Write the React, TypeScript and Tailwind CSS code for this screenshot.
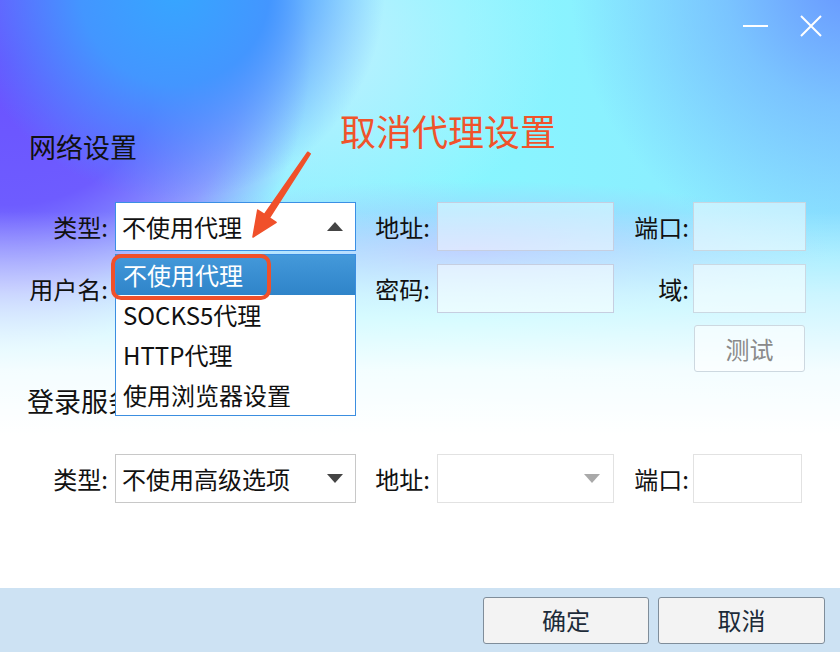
import React from "react";

const font = "font-['Noto_Sans_CJK_SC','Noto_Sans',sans-serif]";

function TriUp({ color = "#444" }: { color?: string }) {
  return (
    <svg width="16" height="9" viewBox="0 0 16 9">
      <polygon points="8,0 16,9 0,9" fill={color} />
    </svg>
  );
}

function TriDown({ color = "#444" }: { color?: string }) {
  return (
    <svg width="16" height="9" viewBox="0 0 16 9">
      <polygon points="0,0 16,0 8,9" fill={color} />
    </svg>
  );
}

function Label({ text, w }: { text: string; w: string }) {
  return <div className={`${w} shrink-0 text-right text-[24px] leading-none text-[#111]`}>{text}</div>;
}

export default function App() {
  const options = ["不使用代理", "SOCKS5代理", "HTTP代理", "使用浏览器设置"];

  return (
    <div className={`w-[840px] h-[652px] flex flex-col overflow-hidden bg-white ${font}`}>
      {/* main area with the gradient backdrop */}
      <div className="relative h-[588px] bg-[linear-gradient(180deg,rgba(255,255,255,0)_0%,rgba(255,255,255,0)_36%,rgba(255,255,255,0.55)_50%,rgba(255,255,255,0.9)_63%,#fff_74%),radial-gradient(ellipse_360px_70px_at_470px_250px,rgba(175,185,255,0.85),rgba(175,185,255,0)),radial-gradient(circle_210px_at_175px_-10px,#36a6ff_0%,#4396ff_45%,rgba(80,140,255,0)_100%),radial-gradient(ellipse_300px_290px_at_10px_60px,#6a52ff_0%,#6e5cff_50%,rgba(140,130,255,0.75)_78%,rgba(170,170,255,0)_100%),radial-gradient(circle_280px_at_850px_-20px,#6796ff_0%,rgba(110,170,255,0.6)_45%,rgba(120,200,255,0)_100%),radial-gradient(ellipse_260px_200px_at_300px_40px,rgba(200,240,255,0.9),rgba(200,240,255,0)),linear-gradient(90deg,#8fe8ff,#88f6ff_55%,#8ee8ff)]">
        {/* window buttons */}
        <div className="h-[52px] flex items-center justify-end gap-[32px] pr-[18px]">
          <svg width="25" height="4" viewBox="0 0 25 4">
            <line x1="0" y1="2" x2="25" y2="2" stroke="#fff" strokeWidth="2" />
          </svg>
          <svg width="22" height="22" viewBox="0 0 22 22">
            <path d="M1 1 L21 21 M21 1 L1 21" stroke="#fff" strokeWidth="2" />
          </svg>
        </div>

        <div className="mt-[77px] pl-[29px] h-[36px] leading-[36px] text-[27px] text-[#111]">网络设置</div>

        {/* row 1 */}
        <div className="mt-[37px] h-[49px] flex items-center">
          <Label text="类型:" w="w-[108px]" />
          <div className="relative ml-[7px] w-[241px] h-[49px] shrink-0 bg-white border border-[#3b8fe4] flex items-center justify-between pl-[6px] pr-[12px]">
            <span className="text-[24px] text-[#111]">不使用代理</span>
            <TriUp />
            {/* open list */}
            <div className="absolute left-[-1px] top-[51px] z-10 w-[241px] h-[162px] bg-white border border-[#3b8ee0] flex flex-col">
              {options.map((o, i) => (
                <div
                  key={o}
                  className={`h-[40px] flex items-center pl-[7px] text-[24px] ${
                    i === 0 ? "bg-[linear-gradient(180deg,#4499da,#2f84c9)] text-white" : "text-[#111]"
                  }`}
                >
                  {o}
                </div>
              ))}
            </div>
            <div className="absolute left-[-5px] top-[51px] z-20 w-[160px] h-[46px] rounded-[10px] border-[4px] border-[#f0502a]" />
          </div>
          <Label text="地址:" w="w-[74px]" />
          <div className="ml-[7px] w-[177px] h-[49px] shrink-0 bg-white/45 border border-[#c6cee0]" />
          <Label text="端口:" w="w-[75px]" />
          <div className="ml-[4px] w-[113px] h-[49px] shrink-0 bg-white/50 border border-[#c9d6e0]" />
        </div>

        {/* row 2 */}
        <div className="mt-[13px] h-[49px] flex items-center">
          <Label text="用户名:" w="w-[108px]" />
          <div className="ml-[7px] w-[241px] h-[49px] shrink-0" />
          <Label text="密码:" w="w-[74px]" />
          <div className="ml-[7px] w-[177px] h-[49px] shrink-0 bg-white/50 border border-[#c6cee0]" />
          <Label text="域:" w="w-[75px]" />
          <div className="ml-[4px] w-[113px] h-[49px] shrink-0 bg-white/55 border border-[#cbd8e2]" />
        </div>

        {/* row 3 */}
        <div className="mt-[12px] flex">
          <div className="ml-[694px] w-[111px] h-[47px] rounded-[3px] bg-white/60 border border-[#cdd8e0] flex items-center justify-center text-[24px] text-[#8a8a8a]">
            测试
          </div>
        </div>

        <div className="mt-[11px] pl-[27px] h-[36px] leading-[36px] text-[27px] text-[#111]">登录服务器</div>

        {/* row 4 */}
        <div className="mt-[35px] h-[49px] flex items-center">
          <Label text="类型:" w="w-[108px]" />
          <div className="ml-[7px] w-[241px] h-[49px] shrink-0 bg-white border border-[#c8c8c8] flex items-center justify-between pl-[6px] pr-[12px]">
            <span className="text-[24px] text-[#111]">不使用高级选项</span>
            <TriDown />
          </div>
          <Label text="地址:" w="w-[74px]" />
          <div className="ml-[7px] w-[177px] h-[49px] shrink-0 bg-white border border-[#e2e2e2] flex items-center justify-end pr-[13px]">
            <TriDown color="#a9a9a9" />
          </div>
          <Label text="端口:" w="w-[75px]" />
          <div className="ml-[4px] w-[109px] h-[49px] shrink-0 bg-white border border-[#e2e2e2]" />
        </div>

        {/* annotation, drawn over the form */}
        <div className="absolute z-30 left-[340px] top-[106px] text-[36px] leading-[48px] text-[#f0532b]">取消代理设置</div>
        <svg className="absolute z-30 left-[240px] top-[145px]" width="80" height="100" viewBox="0 0 80 100">
          <polygon
            points="67.75,7.17 70.25,8.83 29.4,72.9 36.1,77.3 13,92 17.7,65.1 24.4,69.5"
            fill="#f0502a"
            stroke="#f0502a"
            strokeWidth="1.5"
            strokeLinejoin="round"
          />
        </svg>
      </div>

      {/* footer */}
      <div className="h-[64px] bg-[#cde2f3] flex items-center justify-end gap-[9px] pr-[15px]">
        <button className="w-[166px] h-[47px] rounded-[3px] bg-[#f3f3f3] border border-[#7f8d9a] text-[24px] text-[#1c2b39]">
          确定
        </button>
        <button className="w-[167px] h-[47px] rounded-[3px] bg-[#f3f3f3] border border-[#7f8d9a] text-[24px] text-[#1c2b39]">
          取消
        </button>
      </div>
    </div>
  );
}
